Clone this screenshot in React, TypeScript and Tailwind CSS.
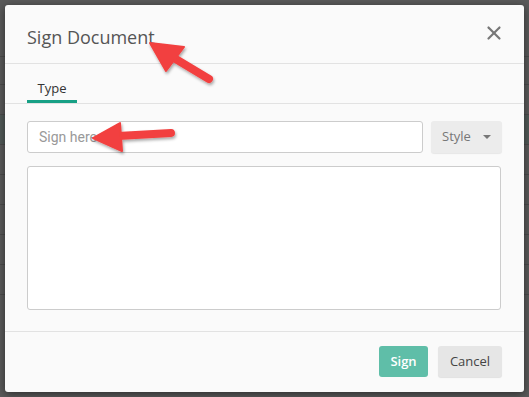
import { X } from "lucide-react";

function Backdrop() {
    // faint page behind the overlay
    return (
        <div className="absolute inset-0 bg-[#5a5a5a]">
            <div className="h-[57px] border-b border-[#4c4c4c]" />
            <div className="h-[28px] border-b border-[#4c4c4c]" />
            <div className="h-[30px] border-b border-[#4c4c4c]" />
            <div className="h-[30px] border-b border-[#4c4c4c] bg-[#525a58]" />
            <div className="h-[30px] border-b border-[#4c4c4c]" />
            <div className="h-[30px] border-b border-[#4c4c4c]" />
            <div className="h-[30px] border-b border-[#4c4c4c]" />
            <div className="h-[30px] border-b border-[#4c4c4c]" />
            <div className="h-[30px] border-b border-[#4c4c4c]" />
        </div>
    );
}

function Arrows() {
    return (
        <svg className="absolute inset-0 pointer-events-none" width="529" height="397" viewBox="0 0 529 397">
            <defs>
                <filter id="sh" x="-20%" y="-20%" width="140%" height="140%">
                    <feDropShadow dx="1" dy="2" stdDeviation="1.5" floodColor="#000" floodOpacity="0.35" />
                </filter>
            </defs>
            <g filter="url(#sh)" fill="#f2403f" stroke="#f2403f" strokeLinejoin="round">
                <line x1="174" y1="58" x2="209" y2="79" strokeWidth="8" strokeLinecap="round" />
                <polygon points="150,43 184,47 166,71" strokeWidth="2" />
                <line x1="118" y1="136" x2="171" y2="133" strokeWidth="8" strokeLinecap="round" />
                <polygon points="93,138 120,123 122,151" strokeWidth="2" />
            </g>
        </svg>
    );
}

export default function App() {
    return (
        <div className="relative w-[529px] h-[397px] overflow-hidden" style={{ fontFamily: '"Open Sans", sans-serif' }}>
            <Backdrop />
            <div className="absolute left-[5px] top-[5px] w-[519px] h-[387px] bg-[#fafafa] rounded-[3px] shadow-[0_2px_8px_rgba(0,0,0,0.5)] flex flex-col">
                <div className="h-[59px] border-b border-[#e2e2e2] flex items-center justify-between pl-[22px] pr-[19px] shrink-0">
                    <span className="text-[18px] text-[#555] pt-[7px]">Sign Document</span>
                    <X className="w-[22px] h-[22px] text-[#777] mt-[-2px]" strokeWidth={2.4} />
                </div>
                <div className="h-[40px] border-b border-[#e2e2e2] pl-[22px] flex items-end shrink-0">
                    <div className="w-[50px] h-full flex flex-col items-center justify-end">
                        <span className="text-[13px] text-[#333] leading-none mb-[5px]">Type</span>
                        <div className="w-full h-[3px] bg-[#17a085]" />
                    </div>
                </div>
                <div className="flex-1 px-[22px] pt-[17px]">
                    <div className="flex gap-[8px]">
                        <div className="w-[396px] h-[32px] bg-white border border-[#cccccc] rounded-[3px] flex items-center pl-[11px]">
                            <span className="text-[14px] text-[#999]" style={{ fontFamily: 'Roboto, sans-serif' }}>Sign here</span>
                        </div>
                        <div className="w-[71px] h-[32px] bg-[#ececec] rounded-[3px] shadow-[0_1px_1px_rgba(0,0,0,0.08)] flex items-center justify-center gap-[12px]">
                            <span className="text-[13px] text-[#777]">Style</span>
                            <span className="w-0 h-0 border-l-[4px] border-r-[4px] border-t-[4px] border-l-transparent border-r-transparent border-t-[#777]" />
                        </div>
                    </div>
                    <div className="mt-[13px] w-[474px] h-[144px] bg-white border border-[#cccccc] rounded-[3px]" />
                </div>
                <div className="h-[61px] border-t border-[#e2e2e2] flex items-start justify-end gap-[10px] pr-[22px] pt-[14px] shrink-0">
                    <div className="w-[49px] h-[31px] bg-[#5fbea8] rounded-[3px] flex items-center justify-center">
                        <span className="text-[13px] font-semibold text-white">Sign</span>
                    </div>
                    <div className="w-[64px] h-[31px] bg-[#e6e6e6] rounded-[3px] shadow-[0_1px_1px_rgba(0,0,0,0.1)] flex items-center justify-center">
                        <span className="text-[13px] text-[#444]">Cancel</span>
                    </div>
                </div>
            </div>
            <Arrows />
        </div>
    );
}
